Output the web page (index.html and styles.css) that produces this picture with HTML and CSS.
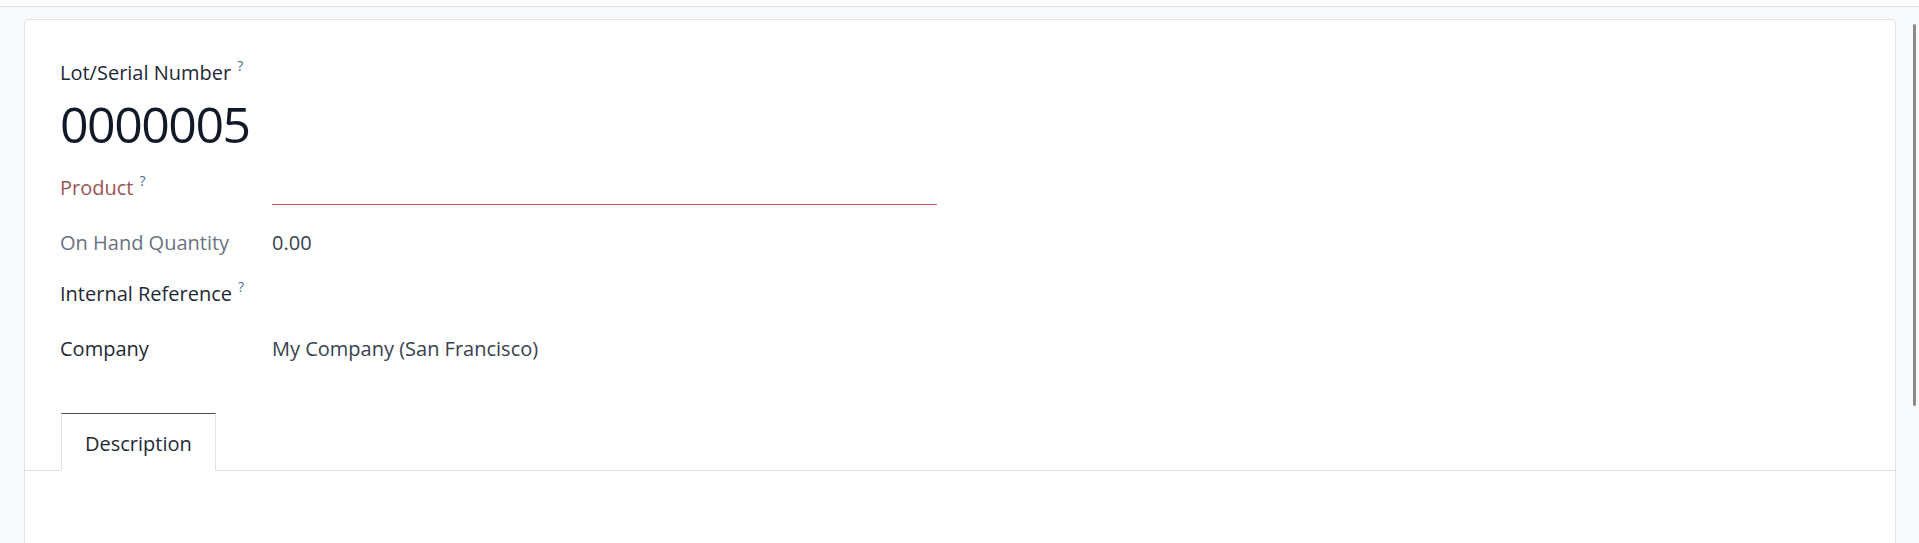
FILE: index.html
```html
<!DOCTYPE html>
<html lang="en">
<head>
<meta charset="utf-8">
<title>Lot/Serial Number 0000005</title>
<link rel="stylesheet" href="styles.css">
</head>
<body>
<div class="topbar"></div>
<main class="content">
  <div class="sheet">
    <div class="title-block">
      <div class="title-label">Lot/Serial Number<sup class="help">?</sup></div>
      <h1 class="title">0000005</h1>
    </div>
    <div class="fields">
      <div class="row row-product">
        <div class="lbl lbl-invalid">Product<sup class="help">?</sup></div>
        <div class="input input-invalid"></div>
      </div>
      <div class="row row-qty">
        <div class="lbl lbl-muted">On Hand Quantity</div>
        <div class="val">0.00</div>
      </div>
      <div class="row row-ref">
        <div class="lbl">Internal Reference<sup class="help">?</sup></div>
        <div class="val"></div>
      </div>
      <div class="row row-company">
        <div class="lbl">Company</div>
        <div class="val">My Company (San Francisco)</div>
      </div>
    </div>
    <div class="tabs">
      <div class="tab tab-active">Description</div>
    </div>
    <div class="tab-pane"></div>
  </div>
</main>
<div class="scrollbar"></div>
</body>
</html>
```
FILE: styles.css
```css
html, body {
  margin: 0;
  height: 100%;
  overflow: hidden;
}
body {
  background: #f8f9fa;
  font-family: "Open Sans", "Noto Sans", sans-serif;
  font-size: 20px;
  line-height: 30px;
  color: #1f2937;
}
.topbar {
  height: 6px;
  background: #ffffff;
  border-bottom: 1px solid #dee2e6;
}
.content {
  padding: 12px 23px 0 24px;
}
.sheet {
  background: #ffffff;
  border: 1px solid #dee2e6;
  border-radius: 4px 4px 0 0;
  min-height: 700px;
}
.title-block {
  padding: 38px 35px 0;
}
.title-label {
  color: #1f2937;
}
.help {
  font-size: 14px;
  line-height: 1;
  vertical-align: 9px;
  margin-left: 6px;
  color: #3f6f9c;
}
.title {
  margin: 6px 0 0;
  font-size: 50px;
  line-height: 60px;
  font-weight: 400;
  letter-spacing: -1.5px;
  color: #111827;
}
.fields {
  padding: 19px 35px 0;
}
.row {
  display: grid;
  grid-template-columns: 212px 665px;
  align-items: start;
}
.row-product { height: 55px; }
.row-qty { height: 51px; }
.row-ref { height: 55px; }
.row-company { height: 30px; }
.lbl {
  color: #1f2937;
}
.lbl-invalid {
  color: #9b5555;
}
.lbl-muted {
  color: #6b7280;
}
.val {
  color: #374151;
}
.input {
  box-sizing: border-box;
  height: 32px;
  border-bottom: 1px solid #c06262;
}
.tabs {
  margin-top: 49px;
  padding-left: 36px;
  display: flex;
  border-bottom: 1px solid #dee2e6;
}
.tab {
  margin-bottom: -1px;
  padding: 15px 23px 11px;
  border: 1px solid #dee2e6;
  border-top-color: #495057;
  border-bottom: 1px solid #ffffff;
  background: #ffffff;
  color: #1f2937;
}
.tab-pane {
  height: 200px;
}
.scrollbar {
  position: fixed;
  right: 3px;
  top: 24px;
  width: 3px;
  height: 382px;
  border-radius: 2px;
  background: #8a8a8a;
}
```
